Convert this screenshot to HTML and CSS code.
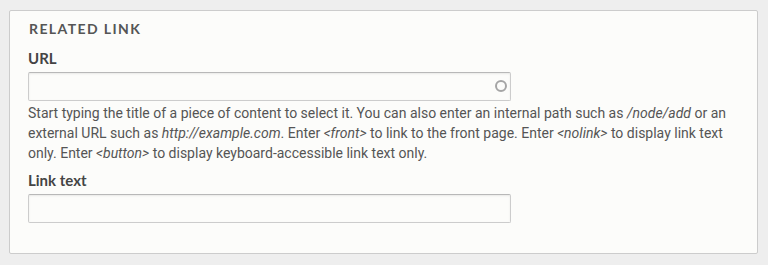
FILE: index.html
```html
<!DOCTYPE html>
<html>
<head>
<meta charset="utf-8">
<link rel="stylesheet" href="styles.css">
</head>
<body>
<div class="page">
  <section class="fieldset">
    <div class="legend">Related link</div>
    <div class="item">
      <label class="label" for="url">URL</label>
      <div class="input-wrap">
        <input id="url" class="input" type="text">
        <span class="throbber"></span>
      </div>
      <div class="description">Start typing the title of a piece of content to select it. You can also enter an internal path such as <em>/node/add</em> or an external URL such as <em>http://example.com</em>. Enter <em>&lt;front&gt;</em> to link to the front page. Enter <em>&lt;nolink&gt;</em> to display link text only. Enter <em>&lt;button&gt;</em> to display keyboard-accessible link text only.</div>
    </div>
    <div class="item item-second">
      <label class="label" for="text">Link text</label>
      <div class="input-wrap">
        <input id="text" class="input" type="text">
      </div>
    </div>
  </section>
</div>
</body>
</html>
```
FILE: styles.css
```css
html, body {
  margin: 0;
  padding: 0;
  background: #eeeeee;
}
.page {
  padding: 10px 10px 11px 9px;
}
.fieldset {
  box-sizing: border-box;
  height: 244px;
  background: #fcfcfa;
  border: 1px solid #cccccc;
  border-radius: 2px;
  padding: 9px 18px 0 18px;
  font-family: Lato, "Noto Sans", sans-serif;
}
.legend {
  font-family: Lato, sans-serif;
  font-weight: 700;
  font-size: 14px;
  line-height: 18px;
  letter-spacing: 0.1em;
  text-transform: uppercase;
  color: #555555;
  margin-left: 1px;
}
.item {
  margin-top: 11px;
}
.item-second {
  margin-top: 8px;
}
.label {
  display: block;
  font-family: Lato, sans-serif;
  font-weight: 700;
  font-size: 15px;
  line-height: 18px;
  color: #444444;
  margin-bottom: 5px;
}
.input-wrap {
  position: relative;
  width: 483px;
}
.input {
  display: block;
  box-sizing: border-box;
  width: 483px;
  height: 29px;
  margin: 0;
  padding: 4px 6px;
  background: #fcfcfa;
  border: 1px solid #cccccc;
  border-top-color: #b8b8b8;
  border-radius: 2px;
  box-shadow: inset 0 1px 2px rgba(0, 0, 0, 0.08);
  font-family: Roboto, sans-serif;
  font-size: 14px;
  outline: none;
}
.throbber {
  position: absolute;
  right: 4px;
  top: 8px;
  width: 8px;
  height: 8px;
  border: 2px solid #a5a5a5;
  border-radius: 50%;
}
.description {
  margin-top: 2px;
  font-family: Roboto, sans-serif;
  font-size: 14px;
  line-height: 20px;
  color: #555555;
}
.description em {
  font-style: italic;
}
```
